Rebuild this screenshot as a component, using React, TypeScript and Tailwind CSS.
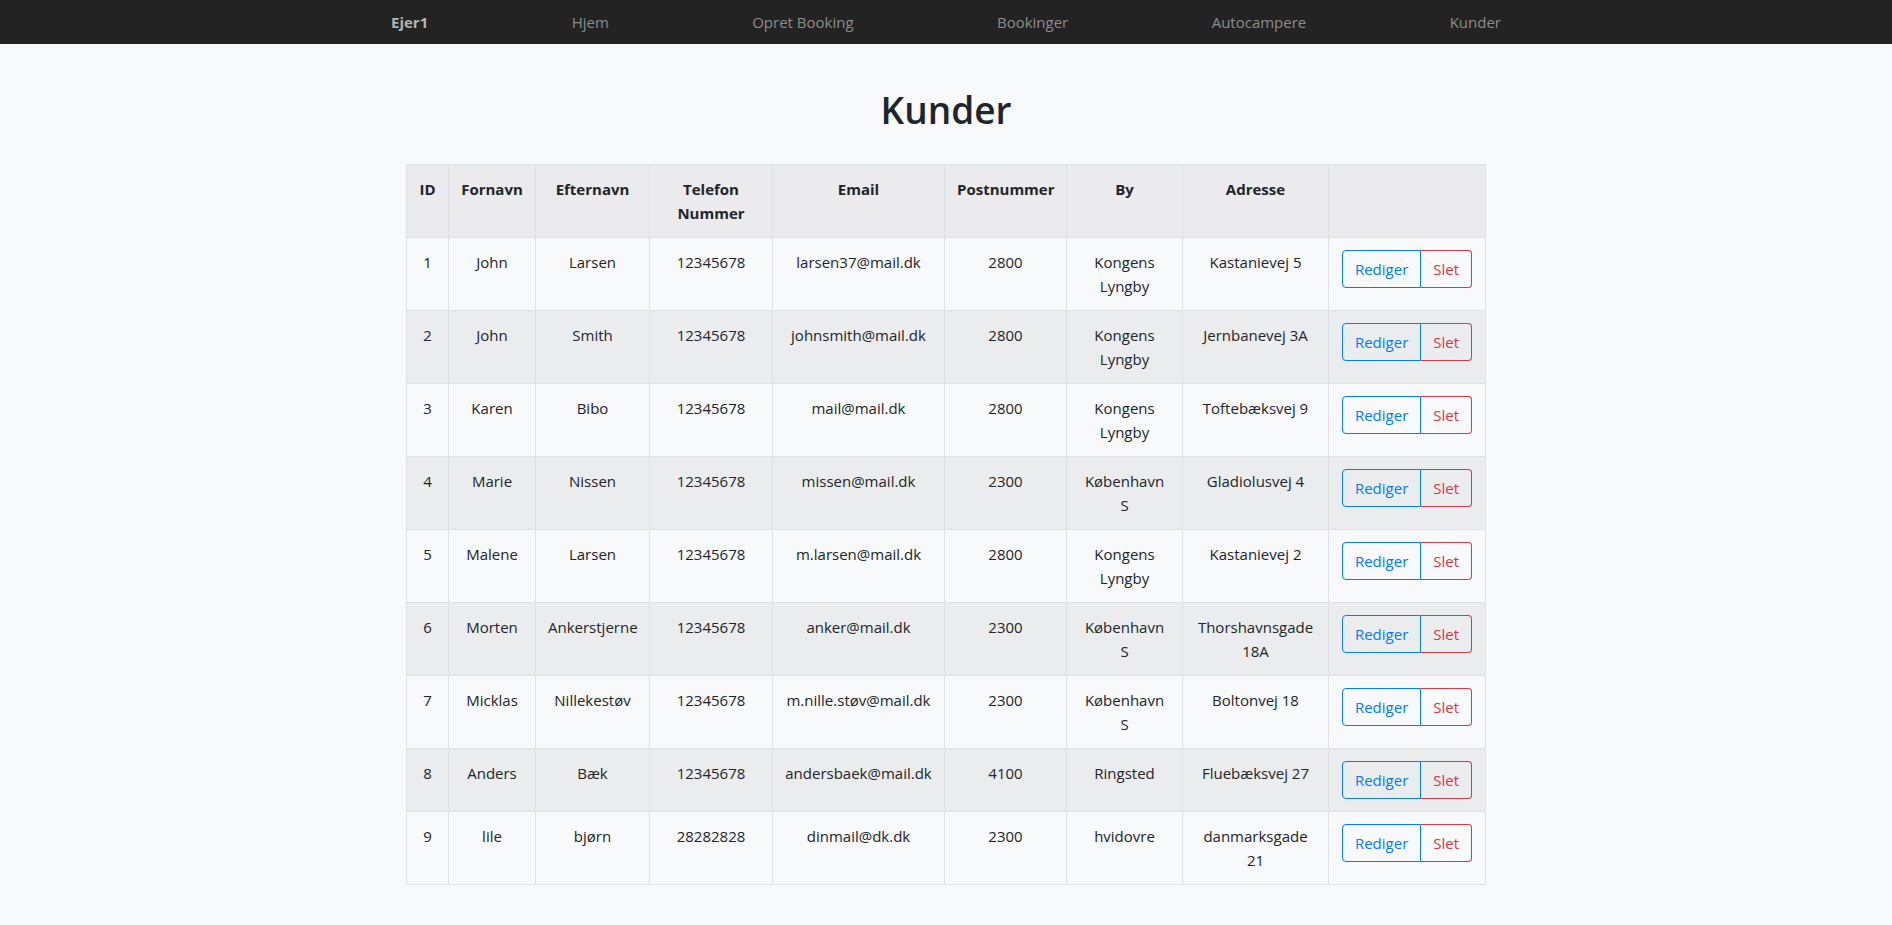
import React from 'react';

const kunder = [
  { id: 1, fornavn: "John", efternavn: "Larsen", telefon: "12345678", email: "larsen37@mail.dk", post: "2800", by: "Kongens Lyngby", adresse: "Kastanievej 5" },
  { id: 2, fornavn: "John", efternavn: "Smith", telefon: "12345678", email: "johnsmith@mail.dk", post: "2800", by: "Kongens Lyngby", adresse: "Jernbanevej 3A" },
  { id: 3, fornavn: "Karen", efternavn: "Bibo", telefon: "12345678", email: "mail@mail.dk", post: "2800", by: "Kongens Lyngby", adresse: "Toftebæksvej 9" },
  { id: 4, fornavn: "Marie", efternavn: "Nissen", telefon: "12345678", email: "missen@mail.dk", post: "2300", by: "København S", adresse: "Gladiolusvej 4" },
  { id: 5, fornavn: "Malene", efternavn: "Larsen", telefon: "12345678", email: "m.larsen@mail.dk", post: "2800", by: "Kongens Lyngby", adresse: "Kastanievej 2" },
  { id: 6, fornavn: "Morten", efternavn: "Ankerstjerne", telefon: "12345678", email: "anker@mail.dk", post: "2300", by: "København S", adresse: "Thorshavnsgade 18A" },
  { id: 7, fornavn: "Micklas", efternavn: "Nillekestøv", telefon: "12345678", email: "m.nille.støv@mail.dk", post: "2300", by: "København S", adresse: "Boltonvej 18" },
  { id: 8, fornavn: "Anders", efternavn: "Bæk", telefon: "12345678", email: "andersbaek@mail.dk", post: "4100", by: "Ringsted", adresse: "Fluebæksvej 27" },
  { id: 9, fornavn: "lile", efternavn: "bjørn", telefon: "28282828", email: "dinmail@dk.dk", post: "2300", by: "hvidovre", adresse: "danmarksgade 21" },
];

const kolonner = [
  { navn: "ID", w: "w-[42px]" },
  { navn: "Fornavn", w: "w-[87px]" },
  { navn: "Efternavn", w: "w-[114px]" },
  { navn: "Telefon Nummer", w: "w-[123px]" },
  { navn: "Email", w: "w-[172px]" },
  { navn: "Postnummer", w: "w-[122px]" },
  { navn: "By", w: "w-[116px]" },
  { navn: "Adresse", w: "w-[146px]" },
  { navn: "", w: "w-[157px]" },
];

const App: React.FC = () => {
  const menu = ["Hjem", "Opret Booking", "Bookinger", "Autocampere", "Kunder"];
  const td = "border border-[#dee2e6] px-3 py-3 align-top";

  return (
    <div className="min-h-screen bg-[#f8f9fa] text-[#212529] font-['Open_Sans',sans-serif]">
      {/* Navbar */}
      <nav className="bg-[#232323] h-[44px]">
        <div className="max-w-[1140px] mx-auto px-[15px] h-full flex items-center justify-between text-[15px]">
          <span className="font-bold text-[#b4b4b4]">Ejer1</span>
          {menu.map((m) => (
            <span key={m} className="text-[#8c8c8c]">{m}</span>
          ))}
        </div>
      </nav>

      <h1 className="text-center text-[37px] font-semibold leading-[48px] mt-[42px] mb-[30px]">Kunder</h1>

      <table className="mx-auto w-[1079px] table-fixed border-collapse text-[15px] leading-6 text-center">
        <thead>
          <tr className="bg-[#ebebed]">
            {kolonner.map((k, i) => (
              <th key={i} className={`${td} ${k.w} font-bold`}>{k.navn}</th>
            ))}
          </tr>
        </thead>
        <tbody>
          {kunder.map((k, i) => (
            <tr key={k.id} className={i % 2 === 1 ? "bg-[#ebecee]" : "bg-[#f8f9fa]"}>
              <td className={td}>{k.id}</td>
              <td className={td}>{k.fornavn}</td>
              <td className={td}>{k.efternavn}</td>
              <td className={td}>{k.telefon}</td>
              <td className={td}>{k.email}</td>
              <td className={td}>{k.post}</td>
              <td className={td}>{k.by}</td>
              <td className={td}>{k.adresse}</td>
              <td className={td}>
                <div className="flex justify-center">
                  <button className="h-[38px] px-3 border border-[#007bff] text-[#007bff] rounded-l-[4px]">Rediger</button>
                  <button className="h-[38px] px-3 border border-l-0 border-[#dc3545] text-[#dc3545] rounded-r-[4px]">Slet</button>
                </div>
              </td>
            </tr>
          ))}
        </tbody>
      </table>
      <div className="h-[41px]"></div>
    </div>
  );
};

export default App;
